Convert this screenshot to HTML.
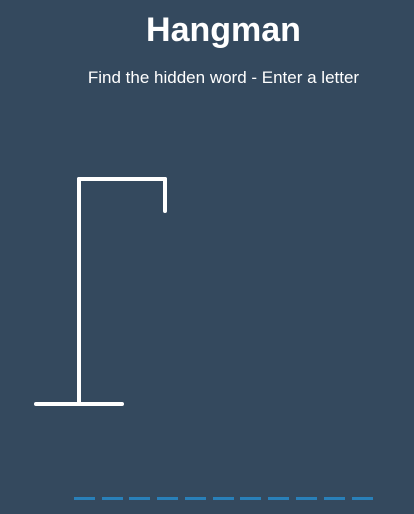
<!DOCTYPE html>
<html><head><style>
body{margin:0;width:414px;height:514px;background:#34495e;color:#fff;font-family:"Liberation Sans",sans-serif;overflow:hidden;position:relative}
h1{position:absolute;top:11px;left:0;width:447px;text-align:center;margin:0;font-size:34px;font-weight:bold}
p{position:absolute;top:68px;left:0;width:447px;text-align:center;margin:0;font-size:17px}
.d{position:absolute;top:497px;width:21px;height:3px;background:#2980b9}
</style></head><body>
<h1>Hangman</h1>
<p>Find the hidden word - Enter a letter</p>
<svg width="414" height="514" style="position:absolute;left:0;top:0">
<g stroke="#fff" stroke-width="4" fill="none" stroke-linecap="round">
<line x1="36" y1="404" x2="122" y2="404"/>
<line x1="79" y1="404" x2="79" y2="179"/>
<line x1="79" y1="179" x2="165" y2="179"/>
<line x1="165" y1="179" x2="165" y2="211"/>
</g></svg>
<div class="d" style="left:74px"></div><div class="d" style="left:102px"></div><div class="d" style="left:129px"></div><div class="d" style="left:157px"></div><div class="d" style="left:185px"></div><div class="d" style="left:213px"></div><div class="d" style="left:240px"></div><div class="d" style="left:268px"></div><div class="d" style="left:296px"></div><div class="d" style="left:324px"></div><div class="d" style="left:352px"></div>
</body></html>
